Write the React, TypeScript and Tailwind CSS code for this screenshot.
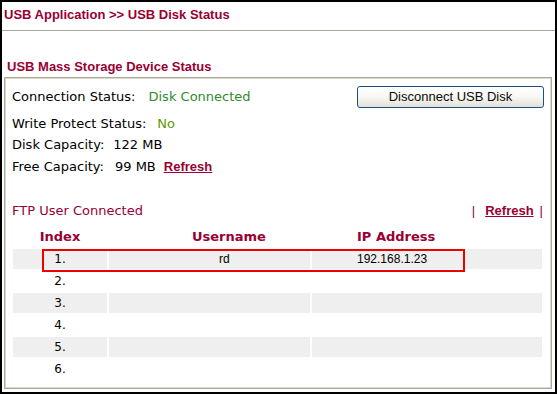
import React from "react";

const RED = "text-[#990033]";

function Row({ children, className = "" }: { children: React.ReactNode; className?: string }) {
  return <div className={`flex items-center ${className}`}>{children}</div>;
}

export default function App() {
  const rows = [
    { idx: "1.", user: "rd", ip: "192.168.1.23" },
    { idx: "2.", user: "", ip: "" },
    { idx: "3.", user: "", ip: "" },
    { idx: "4.", user: "", ip: "" },
    { idx: "5.", user: "", ip: "" },
    { idx: "6.", user: "", ip: "" },
  ];
  return (
    <div className="w-[557px] h-[394px] border-2 border-black bg-white overflow-hidden font-['Liberation_Sans',Arial,sans-serif]">
      <div className={`h-[28px] pt-[5px] pl-[2px] text-[13px] leading-[16px] font-bold ${RED}`}>
        USB Application &gt;&gt; USB Disk Status
      </div>
      <div className="h-px bg-[#aca899]" />
      <div className={`mt-[28px] pl-[5px] text-[13px] leading-[16px] font-bold ${RED}`}>
        USB Mass Storage Device Status
      </div>
      <div className="mt-[2px] ml-[2px] w-[548px] h-[312px] border border-[#aca899] shadow-[inset_0_0_0_1px_#dcd9cd]">
        <div className="pt-[8px] pl-[7px] pr-[7px] text-[13px] font-['DejaVu_Sans',Verdana,sans-serif] text-black">
          <Row className="h-[22px] justify-between">
            <div className="leading-[22px]">
              <span>Connection Status:</span>
              <span className="ml-[13px] text-[#2e8b2e]">Disk Connected</span>
            </div>
            <button className="w-[187px] h-[22px] rounded-[3px] border border-[#1c4f86] bg-gradient-to-b from-white via-[#f7f7f4] to-[#e3e1d6] text-[13px] leading-[20px] text-[#0a0a0a] font-['Liberation_Sans',Arial,sans-serif]">
              Disconnect USB Disk
            </button>
          </Row>
          <div className="mt-[5px] h-[21px] leading-[21px]">
            <span>Write Protect Status:</span>
            <span className="ml-[11px] text-[#5c9a00]">No</span>
          </div>
          <div className="h-[22px] leading-[22px]">
            <span>Disk Capacity:</span>
            <span className="ml-[9px]">122 MB</span>
          </div>
          <div className="h-[22px] leading-[22px]">
            <span>Free Capacity:</span>
            <span className="ml-[11px]">99 MB</span>
            <a className={`ml-[8px] underline font-bold ${RED} font-['Liberation_Sans',Arial,sans-serif]`}>Refresh</a>
          </div>
          <Row className="mt-[22px] h-[22px] justify-between">
            <span className={`leading-[22px] ${RED}`}>FTP User Connected</span>
            <div className={`flex items-center leading-[22px] ${RED} font-['Liberation_Sans',Arial,sans-serif] text-[13px] mr-[1px]`}>
              <span>|</span>
              <a className="ml-[10px] underline font-bold">Refresh</a>
              <span className="ml-[6px]">|</span>
            </div>
          </Row>
          <div className={`mt-[5px] ml-[1px] grid grid-cols-[94px_201px_230px] gap-x-[2px] h-[20px] leading-[20px] font-bold ${RED}`}>
            <div className="text-center">Index</div>
            <div className="pl-[83px]">Username</div>
            <div className="pl-[45px]">IP Address</div>
          </div>
          <div className="relative mt-[2px] ml-[1px] flex flex-col gap-y-[2px]">
            {rows.map((r, i) => {
              const bg = i % 2 === 0 ? "bg-[#efefef]" : "bg-white";
              return (
                <div key={i} className="grid grid-cols-[94px_201px_230px] gap-x-[2px] h-[20px] leading-[20px]">
                  <div className={`${bg} text-center text-[12px]`}>{r.idx}</div>
                  <div className={`${bg} pl-[110px] text-[12px] font-['Liberation_Sans',Arial,sans-serif]`}>{r.user}</div>
                  <div className={`${bg} pl-[45px] text-[12px] font-['Liberation_Sans',Arial,sans-serif]`}>{r.ip}</div>
                </div>
              );
            })}
            <div className="absolute left-[29px] top-0 w-[423px] h-[23px] border-2 border-[#ee0000] pointer-events-none" />
          </div>
        </div>
      </div>
    </div>
  );
}
